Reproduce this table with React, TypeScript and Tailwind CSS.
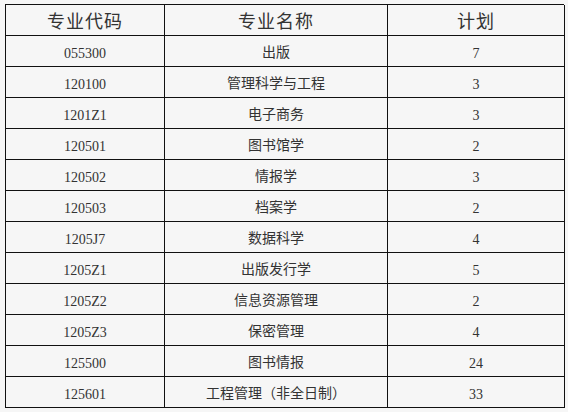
import React from "react";

const rows: [string, string, string][] = [
  ["055300", "出版", "7"],
  ["120100", "管理科学与工程", "3"],
  ["1201Z1", "电子商务", "3"],
  ["120501", "图书馆学", "2"],
  ["120502", "情报学", "3"],
  ["120503", "档案学", "2"],
  ["1205J7", "数据科学", "4"],
  ["1205Z1", "出版发行学", "5"],
  ["1205Z2", "信息资源管理", "2"],
  ["1205Z3", "保密管理", "4"],
  ["125500", "图书情报", "24"],
  ["125601", "工程管理（非全日制）", "33"],
];

const serif = "font-['Liberation_Serif','Noto_Sans_CJK_SC',serif]";
const sans = "font-['Noto_Sans_CJK_SC','Noto_Sans',sans-serif]";

export default function App() {
  return (
    <div className="w-[568px] h-[412px] bg-[#f6f6f6] pt-[4px] pl-[5px] text-[#333]">
      <div className="grid grid-cols-[159px_223px_177px] w-[559px] border-l border-t border-[#111]">
        {["专业代码", "专业名称", "计划"].map((h) => (
          <div
            key={h}
            className={`h-[31px] border-r border-b border-[#111] flex items-start justify-center pt-[3px] text-[18px] tracking-[1px] leading-[24px] ${sans}`}
          >
            {h}
          </div>
        ))}
        {rows.map(([code, name, plan]) => (
          <React.Fragment key={code}>
            <div className={`h-[31px] border-r border-b border-[#111] flex items-start justify-center pt-[8px] text-[14px] leading-[20px] ${serif}`}>
              {code}
            </div>
            <div className={`h-[31px] border-r border-b border-[#111] flex items-start justify-center pt-[5px] text-[14px] leading-[20px] ${sans}`}>
              {name}
            </div>
            <div className={`h-[31px] border-r border-b border-[#111] flex items-start justify-center pt-[8px] text-[14px] leading-[20px] ${serif}`}>
              {plan}
            </div>
          </React.Fragment>
        ))}
      </div>
    </div>
  );
}
